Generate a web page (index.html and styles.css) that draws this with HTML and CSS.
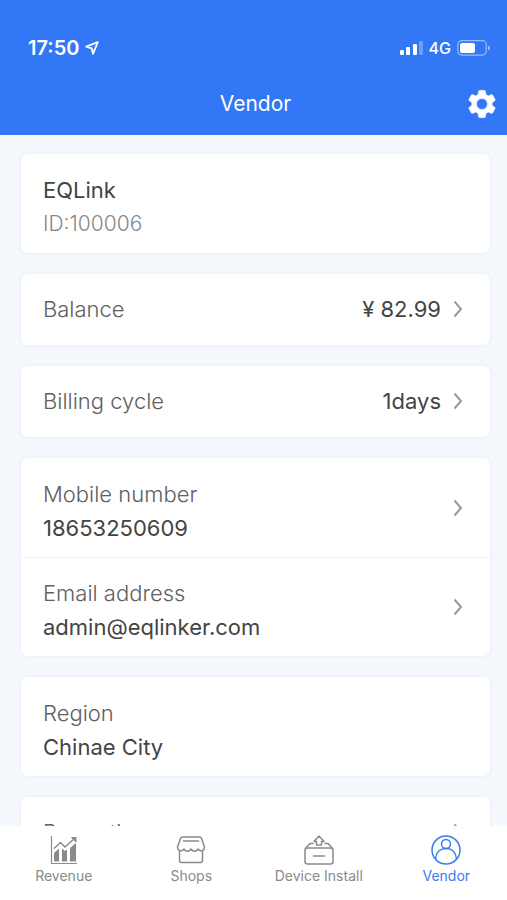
FILE: index.html
```html
<!DOCTYPE html>
<html lang="en">
<head>
<meta charset="utf-8">
<meta name="viewport" content="width=device-width, initial-scale=1">
<title>Vendor</title>
<link rel="stylesheet" href="styles.css">
</head>
<body>
<div class="app">
  <header class="header">
    <div class="status">
      <div class="status-group">
        <span class="time">17:50</span>
        <svg width="14" height="14" viewBox="0 0 14 14" fill="none" stroke="currentColor" stroke-width="1.8" stroke-linejoin="round"><path d="M12.800 1.200 1.200 5.600l5.500 1.700 1.300 5.500z"/></svg>
      </div>
      <div class="status-group">
        <svg width="23" height="16" viewBox="0 0 23 16" fill="currentColor"><rect x="0" y="10" width="4" height="5" rx="1"/><rect x="6" y="7" width="4" height="8" rx="1"/><rect x="13" y="4" width="4" height="11" rx="1"/><rect x="19" y="1" width="4" height="14" rx="1" opacity=".3"/></svg>
        <span class="network">4G</span>
        <svg width="34" height="16" viewBox="0 0 34 16"><rect x=".7" y=".7" width="28.6" height="14.4" rx="4" fill="none" stroke="currentColor" stroke-width="1.2" opacity=".5"/><rect x="3" y="3" width="15" height="10" rx="2" fill="currentColor"/><path d="M31 5.500q2 .8 2 2.500t-2 2.500z" fill="currentColor" opacity=".5"/></svg>
      </div>
    </div>
    <div class="titlebar">
      <h1>Vendor</h1>
      <button class="settings" type="button" aria-label="Settings">
        <svg width="34" height="34" viewBox="0 0 24 24" fill="currentColor" stroke="currentColor" stroke-width=".4"><path d="M19.14 12.94c.04-.3.06-.61.06-.94 0-.32-.02-.64-.07-.94l2.03-1.58c.18-.14.23-.41.12-.61l-1.92-3.32c-.12-.22-.37-.29-.59-.22l-2.39.96c-.5-.38-1.03-.7-1.62-.94l-.36-2.54c-.04-.24-.24-.41-.48-.41h-3.84c-.24 0-.43.17-.47.41l-.36 2.54c-.59.24-1.13.57-1.62.94l-2.39-.96c-.22-.08-.47 0-.59.22L2.74 8.87c-.12.21-.08.47.12.61l2.03 1.58c-.05.3-.09.63-.09.94s.02.64.07.94l-2.03 1.58c-.18.14-.23.41-.12.61l1.92 3.32c.12.22.37.29.59.22l2.39-.96c.5.38 1.03.7 1.62.94l.36 2.54c.05.24.24.41.48.41h3.84c.24 0 .44-.17.47-.41l.36-2.54c.59-.24 1.13-.56 1.62-.94l2.39.96c.22.08.47 0 .59-.22l1.92-3.32c.12-.22.07-.47-.12-.61zM12 15.9a3.9 3.9 0 1 1 0-7.8 3.9 3.9 0 0 1 0 7.8z"/></svg>
      </button>
    </div>
  </header>

  <main class="content">
    <section class="card">
      <div class="row">
        <div class="stack"><span class="value">EQLink</span><span class="muted">ID:100006</span></div>
      </div>
    </section>
    <section class="card">
      <a class="row single" href="#balance">
        <span class="label">Balance</span>
        <span class="value end">¥ 82.99</span>
        <svg class="chevron" viewBox="0 0 10 18"><path d="m1.500 1.500 6.500 7.500-6.500 7.500"/></svg>
      </a>
    </section>
    <section class="card">
      <a class="row single" href="#billing">
        <span class="label">Billing cycle</span>
        <span class="value end">1days</span>
        <svg class="chevron" viewBox="0 0 10 18"><path d="m1.500 1.500 6.500 7.500-6.500 7.500"/></svg>
      </a>
    </section>
    <section class="card">
      <a class="row" href="#mobile">
        <span class="stack"><span class="label">Mobile number</span><span class="value">18653250609</span></span>
        <svg class="chevron" viewBox="0 0 10 18"><path d="m1.500 1.500 6.500 7.500-6.500 7.500"/></svg>
      </a>
      <a class="row" href="#email">
        <span class="stack"><span class="label">Email address</span><span class="value">admin@eqlinker.com</span></span>
        <svg class="chevron" viewBox="0 0 10 18"><path d="m1.500 1.500 6.500 7.500-6.500 7.500"/></svg>
      </a>
    </section>
    <section class="card">
      <div class="row">
        <div class="stack"><span class="label">Region</span><span class="value">Chinae City</span></div>
      </div>
    </section>
    <section class="card">
      <a class="row single" href="#promotion">
        <span class="label">Promotion</span>
        <svg class="chevron" viewBox="0 0 10 18"><path d="m1.500 1.500 6.500 7.500-6.500 7.500"/></svg>
      </a>
    </section>
  </main>

  <nav class="tabs">
    <a class="tab" href="#revenue">
      <svg width="30" height="30" viewBox="0 0 30 30" fill="none" stroke="currentColor"><path d="M2.500 1v27.500H28" stroke-width="1.200"/><path d="M5 13.500l6.500-6 4.500 4.500 9.500-8.500" stroke-width="1.500"/><path d="M22.500 2.500h4.500v4.500z" fill="currentColor"/><path d="M5 18l5-4.500v13H5zM13 13.500l3 2.500 2-1.500v12h-5zM21 13l6-5v18.500h-6z" fill="currentColor" stroke="none"/></svg>
      <span>Revenue</span>
    </a>
    <a class="tab" href="#shops">
      <svg width="30" height="30" viewBox="0 0 30 30" fill="none" stroke="currentColor" stroke-width="1.500" stroke-linejoin="round" stroke-linecap="round"><path d="M6.500 2h17q1.500 0 2 1.500L28.500 12c0 4-4.500 5-6.500 2-2 3-5 3-7 0-2 3-5 3-7 0-2 3-6.500 2-6.500-2L4.500 3.500Q5 2 6.500 2z"/><path d="M7.500 6h15M3.500 16v9.500q0 2 2 2h19q2 0 2-2V16"/></svg>
      <span>Shops</span>
    </a>
    <a class="tab" href="#install">
      <svg width="30" height="30" viewBox="0 0 30 30" fill="none" stroke="currentColor" stroke-width="1.500" stroke-linejoin="round" stroke-linecap="round"><rect x="1" y="13" width="28" height="16" rx="2.500"/><path d="M1.500 13.500 6 8.500h3M28.500 13.500 24 8.500h-3M9.500 21h11M15 1l5 5.500h-2.500V10h-5V6.500H10z"/></svg>
      <span>Device Install</span>
    </a>
    <a class="tab active" href="#vendor" aria-current="page">
      <svg width="30" height="30" viewBox="0 0 30 30" fill="none" stroke="currentColor" stroke-width="1.500"><circle cx="15" cy="15" r="14"/><circle cx="15" cy="9" r="4.500"/><path d="M4.500 24C5 17.500 9 13.500 15 13.500s10 4 10.500 10.500"/></svg>
      <span>Vendor</span>
    </a>
  </nav>
</div>
</body>
</html>
```
FILE: styles.css
```css
* { box-sizing: border-box; }

body {
  margin: 0;
  background: #f5f9fd;
  color: #444;
  font-family: Inter, "Noto Sans", sans-serif;
}

a { color: inherit; text-decoration: none; }
svg { display: block; flex: none; }

.app {
  display: flex;
  flex-direction: column;
  height: 100vh;
  overflow: hidden;
}

.header {
  flex: none;
  padding-top: 32px;
  background: #3277f6;
  color: #fff;
}

.status {
  display: flex;
  align-items: center;
  justify-content: space-between;
  height: 32px;
  padding: 0 16px 0 28px;
}

.status-group { display: flex; align-items: center; gap: 6px; }
.time { font-size: 20px; font-weight: 600; }
.network { font-size: 16px; font-weight: 500; }

.titlebar {
  display: grid;
  grid-template-columns: 48px 1fr 44px;
  align-items: center;
  height: 71px;
  padding: 9px 3px 0;
}

.titlebar h1 {
  grid-column: 2;
  margin: 0;
  font-size: 21px;
  font-weight: 400;
  line-height: 32px;
  text-align: center;
}

.settings {
  display: grid;
  place-items: center;
  padding: 0;
  border: 0;
  background: none;
  color: inherit;
  cursor: pointer;
}

.content {
  flex: 1;
  min-height: 0;
  display: flex;
  flex-direction: column;
  gap: 21px;
  padding: 19px 17px 0 21px;
  overflow: hidden;
}

.card {
  flex: none;
  border-radius: 7px;
  background: #fff;
  box-shadow: 0 0 5px rgba(80, 90, 190, 0.09);
}

.row {
  display: flex;
  align-items: center;
  gap: 12px;
  min-height: 99px;
  padding: 0 27px 0 22px;
  font-size: 22px;
  line-height: 34px;
}

.row + .row { border-top: 1px solid #edf2f7; }
.row.single { min-height: 71px; padding-bottom: 1px; }
.stack { display: flex; flex-direction: column; padding-top: 6px; }
.label { color: #606060; font-weight: 300; }
.muted { color: #888; font-size: 21px; font-weight: 300; }
.end { margin-left: auto; }

.chevron {
  width: 10px;
  height: 18px;
  margin-left: auto;
  fill: none;
  stroke: #999;
  stroke-width: 2;
}

.end + .chevron { margin-left: 0; }

.tabs {
  flex: none;
  display: grid;
  grid-template-columns: repeat(4, 1fr);
  height: 74px;
  margin-right: -3px;
  background: #fff;
}

.tab {
  display: flex;
  flex-direction: column;
  align-items: center;
  gap: 3px;
  padding-top: 9px;
  color: #8a8a8a;
  font-size: 14px;
  line-height: 16px;
}

.tab.active { color: #3a7de8; }
```
